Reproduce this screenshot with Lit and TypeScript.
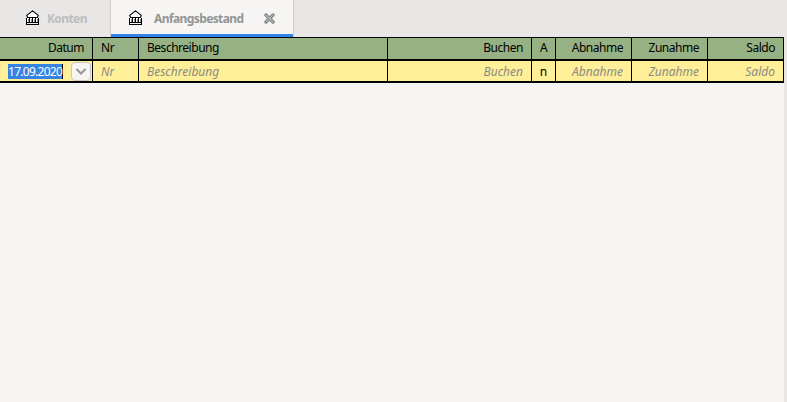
import { LitElement, html, css } from "lit";
import { customElement } from "lit/decorators.js";

type Column = { key: string; label: string; value: string; side?: string };

const columns: Column[] = [
  { key: "date", label: "Datum", value: "17.09.2020", side: "end" },
  { key: "num", label: "Nr", value: "" },
  { key: "desc", label: "Beschreibung", value: "" },
  { key: "transfer", label: "Buchen", value: "", side: "end" },
  { key: "rec", label: "A", value: "n", side: "mid" },
  { key: "dec", label: "Abnahme", value: "", side: "end" },
  { key: "inc", label: "Zunahme", value: "", side: "end" },
  { key: "bal", label: "Saldo", value: "", side: "end" },
];

@customElement("bank-icon")
class BankIcon extends LitElement {
  static styles = css`
    :host { display: block; width: 14px; height: 15px; flex: none; }
    svg { display: block; }
  `;
  render() {
    return html`<svg width="14" height="15" viewBox="0 0 14 15">
      <path d="M7.5 .9 L13.3 5.4 L12.4 7.5 H2.6 L1.7 5.4 Z" fill="#fff" stroke="#000" stroke-width="1.1"/>
      <path d="M1 8h13v5H1z" fill="#fff"/>
      <g fill="#000" shape-rendering="crispEdges">
        <path d="M2 7h11v1H2z M1 8h1v5H1z M4 8h1v5H4z M7 8h1v5H7z M10 8h1v5h-1z M13 8h1v5h-1z M1 12h13v1H1z M1 14h13v1H1z M1 13h1v1H1z M13 13h1v1h-1z"/>
        <path d="M3 9h1v3H3z M6 9h1v3H6z M9 9h1v3H9z M12 9h1v3h-1z" fill="#888"/>
      </g>
    </svg>`;
  }
}

@customElement("app-root")
class AppRoot extends LitElement {
  static styles = css`
    :host {
      display: flex; flex-direction: column; height: 402px; box-sizing: border-box;
      background: #f6f5f4; font: 12px/20px "Noto Sans", sans-serif; color: #000; overflow: hidden;
    }
    .tabs { display: flex; height: 37px; background: #e8e7e6; flex: none; }
    .tab { display: flex; align-items: center; box-sizing: border-box; height: 37px; font-weight: 700; font-size: 12px; letter-spacing: -0.6px; }
    .tab.idle { width: 110px; padding-left: 25px; color: #bcbdbc; }
    .tab.active {
      width: 184px; padding-left: 17px; background: #f6f5f4; color: #929595;
      border: solid #d0cdca; border-width: 0 1px; box-shadow: inset 0 -3px #3584e4;
    }
    bank-icon { margin-bottom: 2px; }
    .name { margin-left: 8px; line-height: 36px; white-space: nowrap; }
    .active .name { margin-left: 12px; width: 109px; }
    .close { display: block; margin-bottom: 1px; }
    .main { display: flex; flex: 1; }
    .register { width: 784px; }
    .strip { flex: 1; background: #e8e7e6; }
    .row { display: grid; grid-template-columns: 93px 46px 249px 144px 24px 76px 76px 76px; border-bottom: 2px solid #000; }
    .head { background: #96b183; height: 21px; border-top: 1px solid #000; letter-spacing: -0.48px; }
    .entry { background: #ffef98; height: 20px; }
    .cell { display: flex; padding: 0 8px; border-right: 1px solid #000; white-space: nowrap; min-width: 0; }
    .entry .cell { line-height: 22px; }
    .end { justify-content: flex-end; }
    .mid { justify-content: center; padding: 0; }
    .hint { color: #8b8b83; font-style: italic; }
    .entry .date { padding: 0 1px 0 8px; justify-content: space-between; }
    .entry .picked { background: #3584e4; color: #fff; height: 15px; line-height: 15px; margin-top: 3px; border-right: 1px solid #000; width: 54px; letter-spacing: -0.72px; }
    .drop { box-sizing: border-box; width: 20px; height: 19px; margin-top: 1px; border: 1px solid #cdc7c2; border-radius: 4px; background: #f6f5f4; }
    .drop svg { display: block; }
  `;

  private cell(c: Column) {
    if (c.key === "date")
      return html`<div class="cell date"><span class="picked">${c.value}</span><span class="drop">
        <svg width="18" height="17" viewBox="0 0 18 17"><path d="M4.5 6 L9 10.5 L13.5 6" fill="none" stroke="#929595" stroke-width="2"/></svg></span></div>`;
    return html`<div class="cell ${c.side ?? ""}"><span class=${c.value ? "" : "hint"}>${c.value || c.label}</span></div>`;
  }

  render() {
    return html`
      <div class="tabs">
        <div class="tab idle"><bank-icon></bank-icon><span class="name">Konten</span></div>
        <div class="tab active"><bank-icon></bank-icon><span class="name">Anfangsbestand</span>
          <svg class="close" width="12" height="11" viewBox="-1 0 12 11"><path d="M2 2 L9 9 M9 2 L2 9" stroke="#858a87" stroke-width="3.4" stroke-linecap="round"/><path d="M2 2 L9 9 M9 2 L2 9" stroke="#b0b4b0" stroke-width="1.2"/></svg>
        </div>
      </div>
      <div class="main">
        <div class="register">
          <div class="row head">${columns.map((c) => html`<div class="cell ${c.side ?? ""}"><span>${c.label}</span></div>`)}</div>
          <div class="row entry">${columns.map((c) => this.cell(c))}</div>
        </div>
        <div class="strip"></div>
      </div>`;
  }
}
